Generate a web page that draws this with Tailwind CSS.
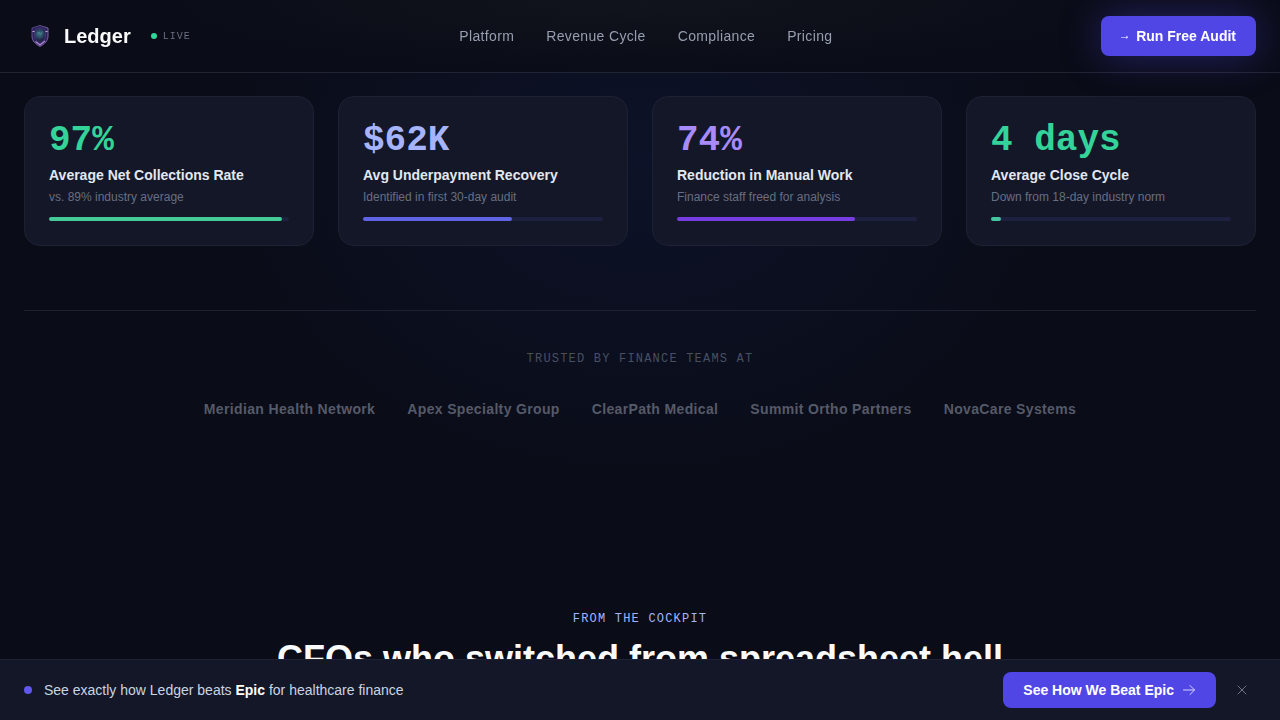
<!DOCTYPE html>
<html lang="en">
<head>
  <meta charset="UTF-8" />
  <meta name="viewport" content="width=device-width, initial-scale=1.0" />
  <title>Ledger</title>
  <script src="https://cdn.jsdelivr.net/npm/@tailwindcss/browser@4"></script>
</head>
<body class="min-h-screen bg-[#0a0c17] bg-[radial-gradient(ellipse_440px_340px_at_50%_160px,#0d1228,#0a0c1700)] bg-no-repeat font-['Liberation_Sans',Arial,sans-serif] text-white">

  <!-- Header -->
  <header class="fixed inset-x-0 top-0 z-20 border-b border-[#222433] bg-[#0a0c17] bg-[radial-gradient(ellipse_480px_72px_at_50%_0px,#11141d,#0a0c1700)]">
    <div class="flex h-18 items-center justify-between px-6">
      <div class="flex items-center gap-5">
        <a href="#" class="flex items-center gap-2 text-xl font-bold text-slate-50">
          <svg class="size-8" viewBox="0 0 32 32" fill="none" aria-hidden="true">
            <defs>
              <linearGradient id="rim" x1="8" y1="5" x2="24" y2="27" gradientUnits="userSpaceOnUse">
                <stop stop-color="#43386f" />
                <stop offset=".5" stop-color="#7d69ad" />
                <stop offset="1" stop-color="#7a4fae" />
              </linearGradient>
              <radialGradient id="core" cx="15.500" cy="14" r="6" gradientUnits="userSpaceOnUse">
                <stop stop-color="#3c7480" />
                <stop offset=".6" stop-color="#2b4a66" />
                <stop offset="1" stop-color="#222548" />
              </radialGradient>
            </defs>
            <path d="M16 5.500 24 8v8c0 5-3.500 8-8 10.500C11.500 24 8 21 8 16V8Z" fill="#2d2257" stroke="url(#rim)" />
            <path d="M16 8 21.500 10v6c0 3.500-2.500 5.500-5.500 7.500-3-2-5.500-4-5.500-7.500v-6Z" fill="url(#core)" stroke="#4a3a80" stroke-width=".8" />
            <path d="m13 14 2-2 1.500 2.500 2-3" stroke="#4f8c96" stroke-width=".8" />
            <path d="m11.500 21.500 4.500 3.500 5-4" stroke="#b08bd2" stroke-width="1.200" />
            <path d="M8.500 11.500h2M21.500 11.500h2" stroke="#c3a6dc" />
          </svg>
          Ledger
        </a>
        <span class="flex items-center gap-1.5 font-['Liberation_Mono',monospace] text-[10px] tracking-widest text-[#6b7182]">
          <span class="size-1.5 rounded-full bg-[#34d399]"></span>
          LIVE
        </span>
      </div>
      <nav class="flex gap-8 text-sm tracking-wide text-[#969eb0]">
        <a href="#platform">Platform</a>
        <a href="#revenue">Revenue Cycle</a>
        <a href="#compliance">Compliance</a>
        <a href="#pricing">Pricing</a>
      </nav>
      <button type="button" class="flex h-10 items-center gap-2 rounded-lg bg-[#4f46e5] px-5 text-sm font-semibold shadow-[0_0_40px_#4f46e566]">
        <span class="font-['Liberation_Mono',monospace] text-xs font-normal">→</span>
        Run Free Audit
      </button>
    </div>
  </header>

  <main class="px-6 pt-24">
    <!-- Stats -->
    <section class="grid grid-cols-4 gap-6 pb-16">
      <div class="rounded-2xl border border-[#1d2133] bg-[#141727] p-6">
        <p class="font-['Liberation_Mono',monospace] text-4xl/10 font-bold text-[#34d399]">97%</p>
        <h3 class="mt-1 text-sm font-semibold text-slate-200">Average Net Collections Rate</h3>
        <p class="mt-1 text-xs text-[#686e82]">vs. 89% industry average</p>
        <div class="mt-3 h-1 rounded-full bg-[#1e2040]">
          <div class="h-1 rounded-full bg-[#45cb97]" style="width: 97%"></div>
        </div>
      </div>
      <div class="rounded-2xl border border-[#1d2133] bg-[#141727] p-6">
        <p class="font-['Liberation_Mono',monospace] text-4xl/10 font-bold text-[#a5b4fc]">$62K</p>
        <h3 class="mt-1 text-sm font-semibold text-slate-200">Avg Underpayment Recovery</h3>
        <p class="mt-1 text-xs text-[#686e82]">Identified in first 30-day audit</p>
        <div class="mt-3 h-1 rounded-full bg-[#1e2040]">
          <div class="h-1 rounded-full bg-[#6063e4]" style="width: 62%"></div>
        </div>
      </div>
      <div class="rounded-2xl border border-[#1d2133] bg-[#141727] p-6">
        <p class="font-['Liberation_Mono',monospace] text-4xl/10 font-bold text-[#a78bfa]">74%</p>
        <h3 class="mt-1 text-sm font-semibold text-slate-200">Reduction in Manual Work</h3>
        <p class="mt-1 text-xs text-[#686e82]">Finance staff freed for analysis</p>
        <div class="mt-3 h-1 rounded-full bg-[#1e2040]">
          <div class="h-1 rounded-full bg-[#763de0]" style="width: 74%"></div>
        </div>
      </div>
      <div class="rounded-2xl border border-[#1d2133] bg-[#141727] p-6">
        <p class="font-['Liberation_Mono',monospace] text-4xl/10 font-bold text-[#34d399]">4 days</p>
        <h3 class="mt-1 text-sm font-semibold text-slate-200">Average Close Cycle</h3>
        <p class="mt-1 text-xs text-[#686e82]">Down from 18-day industry norm</p>
        <div class="mt-3 h-1 rounded-full bg-[#1e2040]">
          <div class="h-1 rounded-full bg-[#45c5a0]" style="width: 4%"></div>
        </div>
      </div>
    </section>

    <!-- Customers -->
    <section class="border-t border-[#1e2130] pt-10 text-center">
      <p class="font-['Liberation_Mono',monospace] text-xs tracking-widest text-[#475063]">TRUSTED BY FINANCE TEAMS AT</p>
      <ul class="mt-8 flex flex-wrap justify-center gap-8 text-sm font-semibold tracking-wide text-[#555a69]">
        <li>Meridian Health Network</li>
        <li>Apex Specialty Group</li>
        <li>ClearPath Medical</li>
        <li>Summit Ortho Partners</li>
        <li>NovaCare Systems</li>
      </ul>
    </section>

    <!-- Testimonials -->
    <section class="pt-48 text-center">
      <p class="font-['Liberation_Mono',monospace] text-xs tracking-widest text-[#a5b4fc]">FROM THE COCKPIT</p>
      <h2 class="mt-3 text-4xl font-bold text-slate-50">CFOs who switched from spreadsheet hell</h2>
    </section>
  </main>

  <!-- Bottom bar -->
  <aside class="fixed inset-x-0 bottom-0 z-20 flex items-center justify-between border-t border-[#1f2233] bg-[#141727] px-6 py-3">
    <p class="flex items-center gap-3 text-sm text-slate-300">
      <span class="size-2 rounded-full bg-[#6058ec]"></span>
      <span>See exactly how Ledger beats <strong class="font-bold text-white">Epic</strong> for healthcare finance</span>
    </p>
    <div class="flex items-center gap-3">
      <button type="button" class="flex h-9 items-center gap-2 rounded-lg bg-[#4f46e5] px-5 text-sm font-semibold">
        See How We Beat Epic
        <svg class="size-3.5" viewBox="0 0 14 14" fill="none" stroke="#d6d4fa" stroke-linecap="round" stroke-linejoin="round" aria-hidden="true">
          <path d="M1.500 7h11M8 2.500 12.500 7 8 11.500" />
        </svg>
      </button>
      <button type="button" aria-label="Close" class="p-2 text-[#70768a]">
        <svg class="size-3" viewBox="0 0 12 12" fill="none" stroke="currentColor" stroke-linecap="round" aria-hidden="true">
          <path d="m2 2 8 8M10 2l-8 8" />
        </svg>
      </button>
    </div>
  </aside>
</body>
</html>
